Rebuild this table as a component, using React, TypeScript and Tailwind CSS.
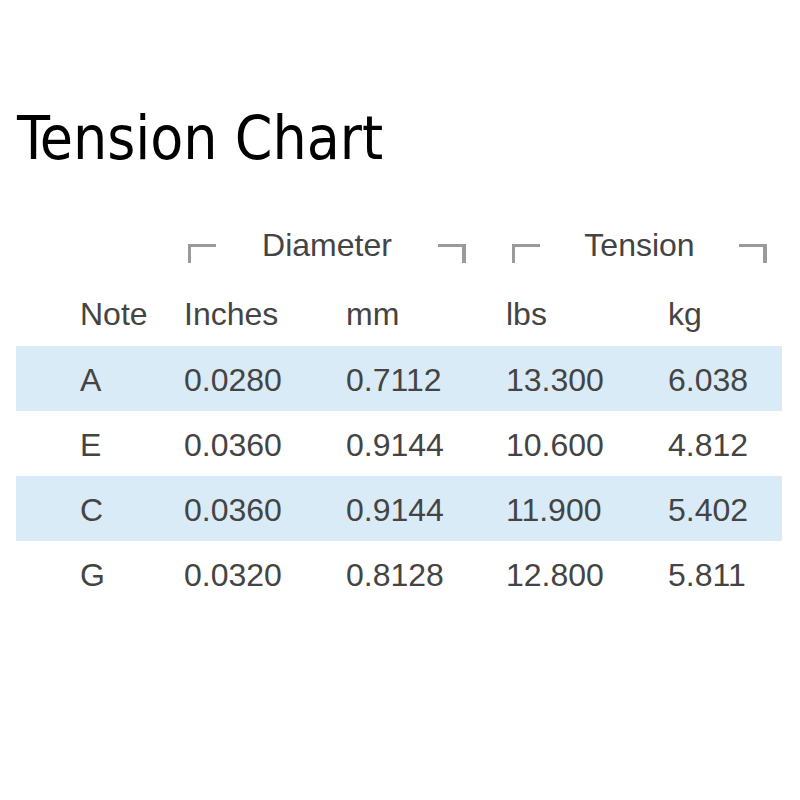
import React from "react";

const rows = [
  { note: "A", inch: "0.0280", mm: "0.7112", lbs: "13.300", kg: "6.038", shade: true },
  { note: "E", inch: "0.0360", mm: "0.9144", lbs: "10.600", kg: "4.812", shade: false },
  { note: "C", inch: "0.0360", mm: "0.9144", lbs: "11.900", kg: "5.402", shade: true },
  { note: "G", inch: "0.0320", mm: "0.8128", lbs: "12.800", kg: "5.811", shade: false },
];

const grid = "grid grid-cols-[168px_162px_160px_162px_114px]";

function Bracket({ side }: { side: "left" | "right" }) {
  return (
    <div
      className={
        "mt-[15px] h-[19px] w-[28px] border-t-[3px] border-[#9a9a9a] " +
        (side === "left" ? "border-l-[3px]" : "border-r-[4px]")
      }
    />
  );
}

function Group({ label, cls }: { label: string; cls: string }) {
  return (
    <div className={"col-span-2 flex items-start justify-between " + cls}>
      <Bracket side="left" />
      <span className="leading-none">{label}</span>
      <Bracket side="right" />
    </div>
  );
}

export default function App() {
  return (
    <div
      className="h-[800px] w-[800px] bg-white text-[#444444]"
      style={{ fontFamily: '"Liberation Sans", Arial, sans-serif' }}
    >
      <div className="h-[108px]" />
      <h1
        className="pl-[17px] text-[60px] leading-none text-black"
        style={{ fontFamily: '"DejaVu Sans Condensed", "DejaVu Sans", sans-serif' }}
      >
        Tension Chart
      </h1>
      <div className="ml-[16px] mt-[61px] w-[766px] text-[32px]">
        <div className={grid + " h-[69px]"}>
          <div />
          <Group label="Diameter" cls="ml-[4px] mr-[40px]" />
          <Group label="Tension" cls="ml-[6px] mr-[15px]" />
        </div>
        <div className={grid + " h-[48px] leading-none"}>
          <div className="pl-[64px]">Note</div>
          <div>Inches</div>
          <div>mm</div>
          <div>lbs</div>
          <div>kg</div>
        </div>
        {rows.map((r) => (
          <div
            key={r.note}
            className={grid + " h-[65px] items-center pt-[2px] leading-none " + (r.shade ? "bg-[#d9ebf7]" : "")}
          >
            <div className="pl-[64px]">{r.note}</div>
            <div>{r.inch}</div>
            <div>{r.mm}</div>
            <div>{r.lbs}</div>
            <div>{r.kg}</div>
          </div>
        ))}
      </div>
    </div>
  );
}
